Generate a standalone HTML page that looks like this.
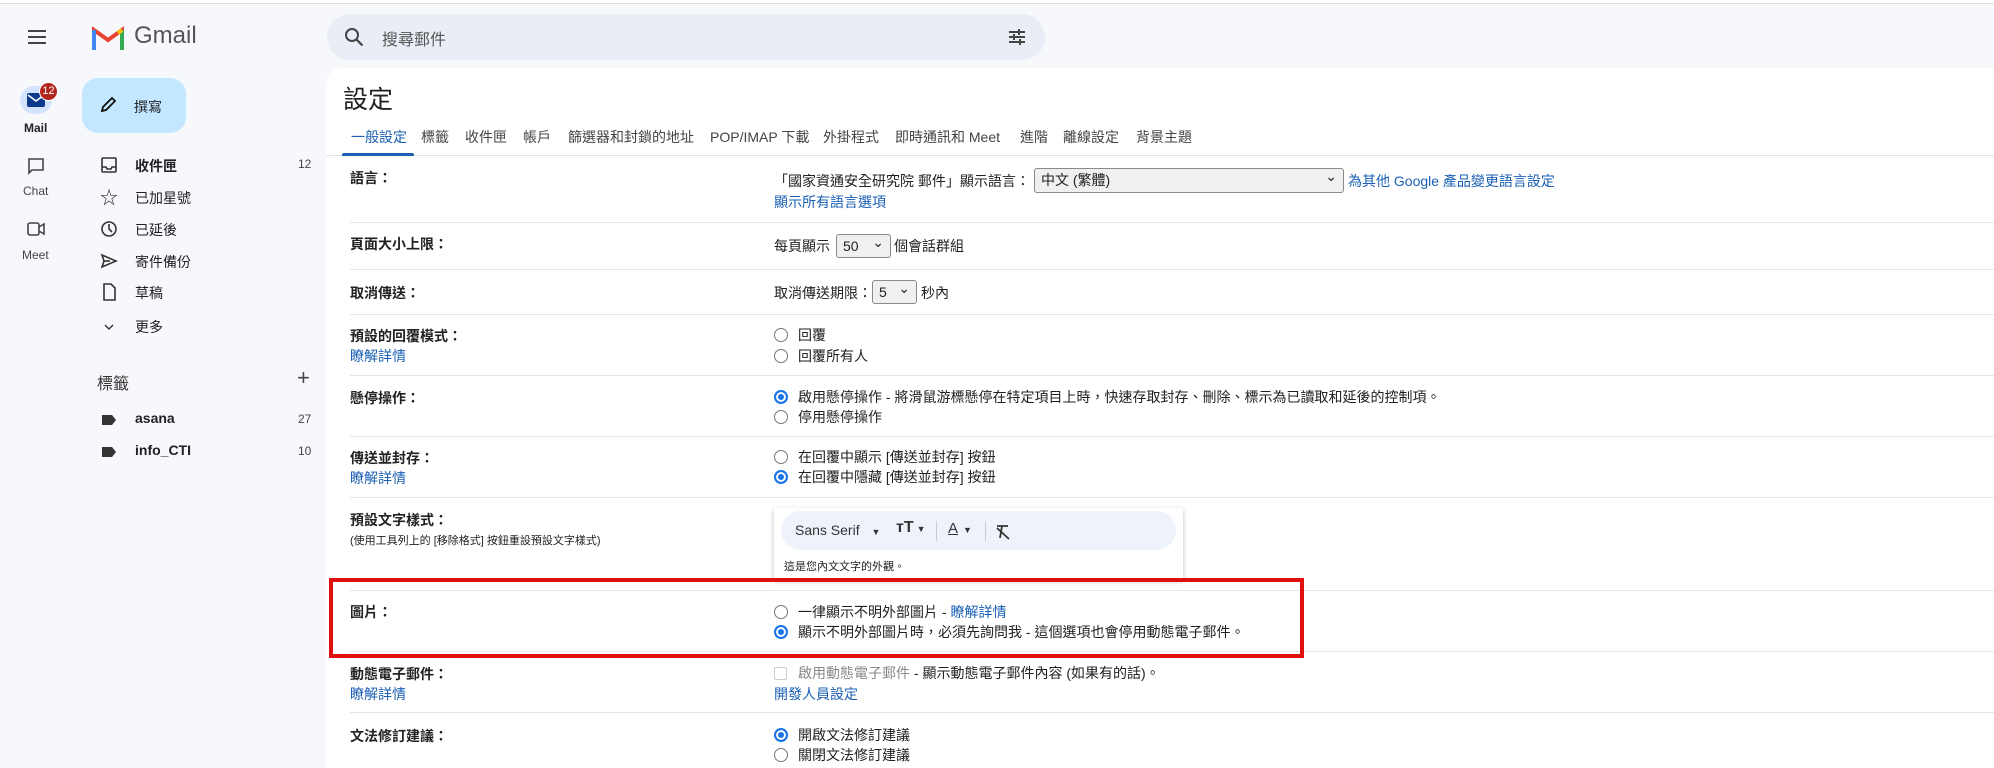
<!DOCTYPE html>
<html><head><meta charset="utf-8"><style>
*{margin:0;padding:0;box-sizing:border-box}
body{width:1994px;height:762px;overflow:hidden;background:#f6f8fc;font-family:"Liberation Sans","Noto Sans CJK TC",sans-serif;color:#202124;position:relative}
.a{position:absolute;white-space:nowrap}
.t{font-size:14px;line-height:18px}
.lbl{font-size:14px;font-weight:600;color:#222;left:350px}
.lnk{color:#1a5fb4}
.sep{position:absolute;left:350px;right:0;height:1px;background:#e6e6e6}
.nav{font-size:14px;left:135px}
.ico{position:absolute;left:100px;width:18px;height:18px}
.rad{display:inline-block;width:14px;height:14px;border:1px solid #777;border-radius:50%;vertical-align:-2px;margin-right:10px;background:#fff}
.rad.on{border:2px solid #1a73e8;box-shadow:inset 0 0 0 2px #fff;background:#1a73e8}
.sel{position:absolute;border:1px solid #8a8a8a;border-radius:3px;background:#f0f0f0;font-size:14px;line-height:22px;padding-left:6px}
.sel:after{content:"⌄";position:absolute;right:6px;top:-4px;font-size:14px}
.tab{position:absolute;top:127px;font-size:14px;color:#444}
</style></head><body>
<div class="a" style="left:0;top:0;width:1994px;height:4px;background:#fff;border-bottom:1px solid #ddd"></div>
<div class="a" style="left:28px;top:30px;width:18px;height:2px;background:#444;box-shadow:0 6px 0 #444,0 12px 0 #444"></div>
<svg class="a" style="left:92px;top:26px" width="32" height="24" viewBox="0 0 32 24"><path d="M2 24V4l14 10L30 4v20" fill="none" stroke="#ea4335" stroke-width="4"/><path d="M2 24V4" stroke="#4285f4" stroke-width="4"/><path d="M30 24V4" stroke="#34a853" stroke-width="4"/><path d="M26 7l4-3" stroke="#fbbc04" stroke-width="4"/></svg>
<div class="a" style="left:134px;top:22px;font-size:24px;color:#555">Gmail</div>
<div class="a" style="left:327px;top:14px;width:718px;height:46px;border-radius:23px;background:#e9eef6"></div>
<svg class="a" style="left:344px;top:27px" width="20" height="20" viewBox="0 0 20 20"><circle cx="8" cy="8" r="6" fill="none" stroke="#444" stroke-width="2"/><path d="M12.5 12.5l6 6" stroke="#444" stroke-width="2.2"/></svg>
<div class="a" style="left:382px;top:26px;font-size:16px;color:#555">搜尋郵件</div>
<svg class="a" style="left:1008px;top:28px" width="18" height="18" viewBox="0 0 18 18" stroke="#444" stroke-width="2"><path d="M1 4h16M1 9h16M1 14h16"/><path d="M11 1v6M6 6v6M12 11v6" stroke-width="2"/></svg>
<div class="a" style="left:20px;top:86px;width:32px;height:28px;border-radius:14px;background:#d3e3fd"></div>
<svg class="a" style="left:27px;top:93px" width="18" height="14" viewBox="0 0 18 14"><rect width="18" height="14" rx="2" fill="#0b3a8a"/><path d="M1 2l8 6 8-6" fill="none" stroke="#fff" stroke-width="1.6"/></svg>
<div class="a" style="left:39px;top:82px;width:19px;height:19px;border-radius:50%;background:#b3261e;color:#fff;font-size:11px;text-align:center;line-height:17px;border:1px solid #fff">12</div>
<div class="a" style="left:24px;top:121px;font-size:12px;font-weight:bold">Mail</div>
<svg class="a" style="left:27px;top:157px" width="18" height="18" viewBox="0 0 18 18"><path d="M2 2h14v11H5l-3 3z" fill="none" stroke="#444" stroke-width="1.6"/></svg>
<div class="a" style="left:23px;top:184px;font-size:12px;color:#444">Chat</div>
<svg class="a" style="left:27px;top:222px" width="18" height="14" viewBox="0 0 18 14"><rect x="1" y="1" width="11" height="12" rx="2" fill="none" stroke="#444" stroke-width="1.6"/><path d="M12 5l5-3v10l-5-3" fill="none" stroke="#444" stroke-width="1.6"/></svg>
<div class="a" style="left:22px;top:248px;font-size:12px;color:#444">Meet</div>
<div class="a" style="left:82px;top:78px;width:104px;height:55px;border-radius:16px;background:#c2e7ff"></div>
<svg class="a" style="left:99px;top:96px" width="18" height="18" viewBox="0 0 18 18"><path d="M3 15l1-4 9-9 3 3-9 9z" fill="none" stroke="#111" stroke-width="1.8"/></svg>
<div class="a" style="left:134px;top:97px;font-size:14px">撰寫</div>
<svg class="ico" style="top:156px" viewBox="0 0 18 18"><rect x="2" y="2" width="14" height="14" rx="1" fill="none" stroke="#333" stroke-width="1.6"/><path d="M2 11h4l1 2h4l1-2h4" fill="none" stroke="#333" stroke-width="1.6"/></svg>
<div class="a nav" style="top:156px;font-weight:bold">收件匣</div><div class="a" style="left:298px;top:157px;font-size:12px;color:#444">12</div>
<div class="a" style="left:100px;top:184px;font-size:18px;color:#333">☆</div>
<div class="a nav" style="top:188px">已加星號</div>
<svg class="ico" style="top:220px" viewBox="0 0 18 18"><circle cx="9" cy="9" r="7" fill="none" stroke="#333" stroke-width="1.6"/><path d="M9 4v5l3 3" fill="none" stroke="#333" stroke-width="1.6"/></svg>
<div class="a nav" style="top:220px">已延後</div>
<svg class="ico" style="top:252px" viewBox="0 0 18 18"><path d="M2 3l14 6-14 6 2-6z" fill="none" stroke="#333" stroke-width="1.6"/><path d="M4 9h6" stroke="#333" stroke-width="1.6"/></svg>
<div class="a nav" style="top:252px">寄件備份</div>
<svg class="ico" style="top:283px" viewBox="0 0 18 18"><path d="M4 1h7l4 4v12H4z" fill="none" stroke="#333" stroke-width="1.6"/></svg>
<div class="a nav" style="top:283px">草稿</div>
<svg class="ico" style="top:318px" viewBox="0 0 18 18"><path d="M5 7l4 4 4-4" fill="none" stroke="#333" stroke-width="1.5"/></svg>
<div class="a nav" style="top:317px">更多</div>
<div class="a" style="left:97px;top:370px;font-size:16px;color:#333">標籤</div>
<div class="a" style="left:297px;top:365px;font-size:22px;color:#444">+</div>
<svg class="ico" style="top:411px" viewBox="0 0 18 18"><path d="M2 4h10l4 5-4 5H2z" fill="#333"/></svg>
<div class="a nav" style="top:410px;font-weight:bold">asana</div><div class="a" style="left:298px;top:412px;font-size:12px;color:#444">27</div>
<svg class="ico" style="top:443px" viewBox="0 0 18 18"><path d="M2 4h10l4 5-4 5H2z" fill="#333"/></svg>
<div class="a nav" style="top:442px;font-weight:bold">info_CTI</div><div class="a" style="left:298px;top:444px;font-size:12px;color:#444">10</div>
<div class="a" style="left:326px;top:68px;width:1680px;height:700px;background:#fff;border-radius:16px 0 0 0"></div>
<div class="a" style="left:343px;top:80px;font-size:25px;color:#222">設定</div>
<div class="tab" style="left:351px;color:#1a5fb4">一般設定</div>
<div class="tab" style="left:421px">標籤</div><div class="tab" style="left:465px">收件匣</div><div class="tab" style="left:523px">帳戶</div><div class="tab" style="left:568px">篩選器和封鎖的地址</div><div class="tab" style="left:710px">POP/IMAP 下載</div><div class="tab" style="left:823px">外掛程式</div><div class="tab" style="left:895px">即時通訊和 Meet</div><div class="tab" style="left:1020px">進階</div><div class="tab" style="left:1063px">離線設定</div><div class="tab" style="left:1136px">背景主題</div>
<div class="a" style="left:326px;top:155px;width:1680px;height:1px;background:#e3e3e3"></div>
<div class="a" style="left:342px;top:153px;width:72px;height:3px;background:#1a5fb4;border-radius:2px 2px 0 0"></div>
<div class="sep" style="top:222px"></div><div class="sep" style="top:269px"></div><div class="sep" style="top:314px"></div><div class="sep" style="top:375px"></div><div class="sep" style="top:436px"></div><div class="sep" style="top:497px"></div><div class="sep" style="top:590px"></div><div class="sep" style="top:651px"></div><div class="sep" style="top:712px"></div>
<div class="a lbl" style="top:168px">語言：</div>
<div class="a t" style="left:774px;top:172px">「國家資通安全研究院 郵件」顯示語言：</div>
<div class="sel" style="left:1034px;top:168px;width:310px;height:25px">中文 (繁體)</div>
<div class="a t lnk" style="left:1348px;top:172px">為其他 Google 產品變更語言設定</div>
<div class="a t lnk" style="left:774px;top:193px">顯示所有語言選項</div>
<div class="a lbl" style="top:234px">頁面大小上限：</div>
<div class="a t" style="left:774px;top:237px">每頁顯示</div>
<div class="sel" style="left:836px;top:234px;width:55px;height:24px">50</div>
<div class="a t" style="left:894px;top:237px">個會話群組</div>
<div class="a lbl" style="top:283px">取消傳送：</div>
<div class="a t" style="left:774px;top:284px">取消傳送期限：</div>
<div class="sel" style="left:872px;top:280px;width:45px;height:24px">5</div>
<div class="a t" style="left:921px;top:284px">秒內</div>
<div class="a lbl" style="top:326px">預設的回覆模式：</div>
<div class="a t lnk" style="left:350px;top:347px">瞭解詳情</div>
<div class="a t" style="left:774px;top:326px"><span class="rad"></span>回覆</div>
<div class="a t" style="left:774px;top:347px"><span class="rad"></span>回覆所有人</div>
<div class="a lbl" style="top:388px">懸停操作：</div>
<div class="a t" style="left:774px;top:388px"><span class="rad on"></span>啟用懸停操作 - 將滑鼠游標懸停在特定項目上時，快速存取封存、刪除、標示為已讀取和延後的控制項。</div>
<div class="a t" style="left:774px;top:408px"><span class="rad"></span>停用懸停操作</div>
<div class="a lbl" style="top:448px">傳送並封存：</div>
<div class="a t lnk" style="left:350px;top:469px">瞭解詳情</div>
<div class="a t" style="left:774px;top:448px"><span class="rad"></span>在回覆中顯示 [傳送並封存] 按鈕</div>
<div class="a t" style="left:774px;top:468px"><span class="rad on"></span>在回覆中隱藏 [傳送並封存] 按鈕</div>
<div class="a lbl" style="top:510px">預設文字樣式：</div>
<div class="a" style="left:350px;top:532px;font-size:11px;color:#222">(使用工具列上的 [移除格式] 按鈕重設預設文字樣式)</div>
<div class="a" style="left:774px;top:508px;width:409px;height:71px;background:#fff;box-shadow:0 2px 5px rgba(0,0,0,.25)"></div>
<div class="a" style="left:781px;top:511px;width:395px;height:39px;border-radius:20px;background:#eef2fb"></div>
<div class="a" style="left:795px;top:522px;font-size:14px;color:#333">Sans Serif <span style="font-size:9px;margin-left:8px">▼</span></div>
<div class="a" style="left:896px;top:519px;font-size:16px;font-weight:bold;color:#333">ᴛT<span style="font-size:9px;margin-left:3px">▼</span></div>
<div class="a" style="left:936px;top:521px;width:1px;height:20px;background:#ccc"></div>
<div class="a" style="left:948px;top:520px;font-size:15px;color:#333;text-decoration:underline">A<span style="font-size:9px;margin-left:5px;text-decoration:none;display:inline-block">▼</span></div>
<div class="a" style="left:985px;top:521px;width:1px;height:20px;background:#ccc"></div>
<svg class="a" style="left:995px;top:524px" width="16" height="16" viewBox="0 0 16 16" stroke="#333" stroke-width="1.8"><path d="M2 2h11M7 2l-2 12M2 4l12 11"/></svg>
<div class="a" style="left:784px;top:558px;font-size:11px;color:#222">這是您內文文字的外觀。</div>
<div class="a lbl" style="top:602px">圖片：</div>
<div class="a t" style="left:774px;top:603px"><span class="rad"></span>一律顯示不明外部圖片 - <span class="lnk">瞭解詳情</span></div>
<div class="a t" style="left:774px;top:623px"><span class="rad on"></span>顯示不明外部圖片時，必須先詢問我 - 這個選項也會停用動態電子郵件。</div>
<div class="a" style="left:329px;top:578px;width:975px;height:80px;border:4px solid #e01010"></div>
<div class="a lbl" style="top:664px">動態電子郵件：</div>
<div class="a t lnk" style="left:350px;top:685px">瞭解詳情</div>
<div class="a t" style="left:774px;top:664px"><span style="display:inline-block;width:13px;height:13px;border:1px solid #ccc;border-radius:2px;vertical-align:-2px;margin-right:11px"></span><span style="color:#888">啟用動態電子郵件</span> - 顯示動態電子郵件內容 (如果有的話)。</div>
<div class="a t lnk" style="left:774px;top:685px">開發人員設定</div>
<div class="a lbl" style="top:726px">文法修訂建議：</div>
<div class="a t" style="left:774px;top:726px"><span class="rad on"></span>開啟文法修訂建議</div>
<div class="a t" style="left:774px;top:746px"><span class="rad"></span>關閉文法修訂建議</div>
</body></html>
